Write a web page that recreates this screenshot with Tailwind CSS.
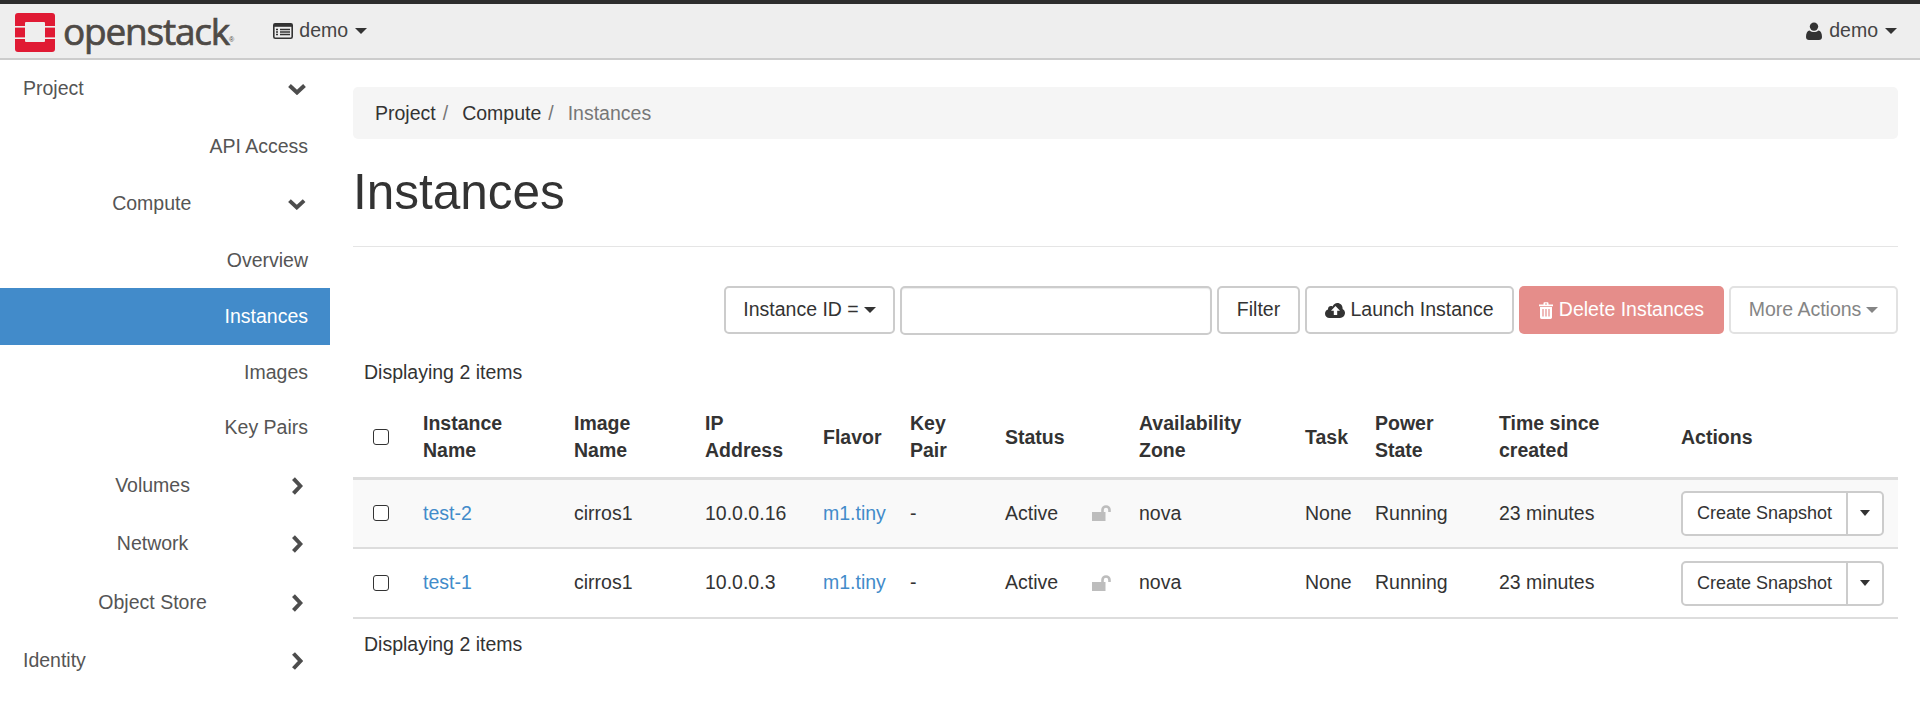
<!DOCTYPE html>
<html lang="en">
  <head>
    <meta charset="UTF-8" />
    <title>Instances</title>
    <script src="https://cdn.jsdelivr.net/npm/@tailwindcss/browser@4"></script>
  </head>
  <body class="bg-white text-[19.5px] text-[#333] font-['Liberation_Sans',Arial,sans-serif] h-[710px] overflow-hidden">
    <!-- top bar -->
    <div class="h-[60px] bg-[#eeeeee] border-t-[4px] border-t-[#2d2d2d] border-b-2 border-b-[#cccccc] flex items-center">
      <svg class="ml-[15px] mt-[3px]" width="40" height="39" viewBox="0 0 40 39">
        <rect width="40" height="39" rx="3" fill="#e01a34" />
        <rect x="10" y="9" width="20" height="20" rx="1" fill="#eeeeee" />
        <rect x="0" y="13" width="10" height="1.6" fill="#eeeeee" />
        <rect x="30" y="13" width="10" height="1.6" fill="#eeeeee" />
        <rect x="0" y="24.4" width="10" height="1.6" fill="#eeeeee" />
        <rect x="30" y="24.4" width="10" height="1.6" fill="#eeeeee" />
      </svg>
      <span class="ml-[8px] text-[37px] leading-none text-[#4e4a46] tracking-[-1.2px] [-webkit-text-stroke:0.7px_#4e4a46] font-['Open_Sans',sans-serif] mt-[-1px]">openstack</span>
      <span class="text-[7px] text-[#4e4a46] self-end mb-[13px]">®</span>
      <svg class="ml-[39px]" width="20" height="16" viewBox="0 0 20 16">
        <rect x="0.8" y="0.8" width="18.4" height="14.4" rx="1.5" fill="none" stroke="#333" stroke-width="1.6" />
        <rect x="0.8" y="0.8" width="18.4" height="3" fill="#333" />
        <path d="M3 6.5h2M3 9h2M3 11.5h2M7 6.5h10M7 9h10M7 11.5h10" stroke="#333" stroke-width="1.3" />
      </svg>
      <span class="ml-[6px] text-[#444]">demo</span>
      <span class="ml-[7px] border-x-[6px] border-t-[6px] border-x-transparent border-t-[#333]"></span>
      <div class="ml-auto mr-[23px] flex items-center">
        <svg width="16" height="18" viewBox="0 0 16 18">
          <circle cx="8" cy="4.6" r="4.2" fill="#333" />
          <path d="M0 15c0-4 1.2-6.4 3.6-6.6 1.2 1 2.7 1.6 4.4 1.6s3.200-.6 4.400-1.600c2.400.2 3.600 2.600 3.600 6.600 0 1.800-1.200 3-3 3H3c-1.800 0-3-1.200-3-3z" fill="#333" />
        </svg>
        <span class="ml-[7px] text-[#444]">demo</span>
        <span class="ml-[7px] border-x-[6px] border-t-[6px] border-x-transparent border-t-[#333]"></span>
      </div>
    </div>

    <div class="flex">
      <!-- sidebar -->
      <div class="w-[330px] shrink-0 text-[#555]">
        <div class="h-[57px] flex items-center justify-between pl-[23px] pr-[24px]">
          <span>Project</span>
          <svg width="18" height="12" viewBox="0 0 18 12"><path d="M1.500 2.500l7.500 7 7.500-7" fill="none" stroke="#4d4d4d" stroke-width="4" /></svg>
        </div>
        <div class="h-[57px] pt-[2px] flex items-center justify-end pr-[22px]">API Access</div>
        <div class="h-[57px] pt-[2px] flex items-center">
          <span class="ml-[15px] w-[280px] text-center">Compute</span>
          <svg class="ml-auto mr-[24px]" width="18" height="12" viewBox="0 0 18 12"><path d="M1.500 2.500l7.500 7 7.500-7" fill="none" stroke="#4d4d4d" stroke-width="4" /></svg>
        </div>
        <div class="h-[57px] pt-[2px] flex items-center justify-end pr-[22px]">Overview</div>
        <div class="h-[57px] flex items-center justify-end pr-[22px] bg-[#428bca] text-white">Instances</div>
        <div class="h-[56px] flex items-center justify-end pr-[22px]">Images</div>
        <div class="h-[56px] pb-[2px] flex items-center justify-end pr-[22px]">Key Pairs</div>
        <div class="h-[58px] flex items-center">
          <span class="ml-[14px] w-[280px] text-center">Volumes</span>
          <svg class="ml-auto mr-[27px]" width="12" height="18" viewBox="0 0 12 18"><path d="M2.500 1.500l7 7.500-7 7.500" fill="none" stroke="#4d4d4d" stroke-width="4" /></svg>
        </div>
        <div class="h-[58px] flex items-center">
          <span class="ml-[14px] w-[280px] text-center">Network</span>
          <svg class="ml-auto mr-[27px]" width="12" height="18" viewBox="0 0 12 18"><path d="M2.500 1.500l7 7.500-7 7.500" fill="none" stroke="#4d4d4d" stroke-width="4" /></svg>
        </div>
        <div class="h-[59px] flex items-center">
          <span class="ml-[14px] w-[280px] text-center">Object Store</span>
          <svg class="ml-auto mr-[27px]" width="12" height="18" viewBox="0 0 12 18"><path d="M2.500 1.500l7 7.500-7 7.500" fill="none" stroke="#4d4d4d" stroke-width="4" /></svg>
        </div>
        <div class="h-[58px] flex items-center justify-between pl-[23px] pr-[27px]">
          <span>Identity</span>
          <svg width="12" height="18" viewBox="0 0 12 18"><path d="M2.500 1.500l7 7.500-7 7.500" fill="none" stroke="#4d4d4d" stroke-width="4" /></svg>
        </div>
      </div>

      <!-- main -->
      <div class="w-[1545px] ml-[23px] pt-[27px]">
        <div class="h-[52px] pt-[2px] bg-[#f5f5f5] rounded-[5px] flex items-center pl-[22px]">
          <span class="text-[#333]">Project</span><span class="text-[#777] ml-[7px]">/</span>
          <span class="ml-[14px] text-[#333]">Compute</span><span class="text-[#777] ml-[7px]">/</span>
          <span class="ml-[14px] text-[#777]">Instances</span>
        </div>
        <h1 class="mt-[27px] text-[49.5px] leading-[52px] text-[#333]">Instances</h1>
        <div class="mt-[28px] border-t border-[#e5e5e5]"></div>

        <!-- toolbar -->
        <div class="mt-[39px] flex justify-end gap-[5px] h-[48px]">
          <button class="w-[171px] border-2 border-[#ccc] rounded-[5px] flex items-center justify-center gap-[5px]">Instance ID =<span class="border-x-[6px] border-t-[6px] border-x-transparent border-t-[#333]"></span></button>
          <input class="w-[312px] h-[49px] border-2 border-[#ccc] rounded-[5px] bg-white shadow-[inset_0_1px_1px_rgba(0,0,0,0.075)]" type="text" />
          <button class="w-[83px] border-2 border-[#ccc] rounded-[5px]">Filter</button>
          <button class="w-[209px] border-2 border-[#ccc] rounded-[5px] flex items-center justify-center gap-[5px]">
            <svg width="20" height="15" viewBox="0 0 20 15">
              <path d="M4.500 15C2 15 0 13.200 0 10.700c0-2 1.200-3.500 3-4.100C3 6.400 3 6.200 3 6c0-1.700 1.300-3 3-3 .6 0 1.100.2 1.600.4C8.500 1.400 10.300 0 12.400 0c2.900 0 5.200 2.300 5.200 5.200v.7c1.400.7 2.400 2.200 2.400 3.900 0 2.800-2.200 5.200-5 5.200z" fill="#333" />
              <path d="M10.500 3l4.500 4.700h-2.800v4.300H8.800V7.700H6z" fill="#fff" />
            </svg>
            Launch Instance</button>
          <button class="w-[205px] bg-[#e58d8a] rounded-[5px] text-white flex items-center justify-center gap-[6px]">
            <svg width="14" height="17" viewBox="0 0 14 17">
              <path d="M4.500 2.500V1.300c0-.6.400-1 1-1h3c.6 0 1 .4 1 1v1.200H14v1.700H0V2.500zM6 1.500v1h2v-1zM1 5h12v10.300c0 .9-.7 1.700-1.600 1.700H2.600C1.700 17 1 16.200 1 15.300z" fill="#fff" />
              <path d="M4 7v7.500M7 7v7.500M10 7v7.500" stroke="#e58d8a" stroke-width="1.200" />
            </svg>
            Delete Instances</button>
          <button class="w-[169px] border-2 border-[#e2e2e2] rounded-[5px] text-[#858585] flex items-center justify-center gap-[5px]">More Actions<span class="border-x-[6px] border-t-[6px] border-x-transparent border-t-[#858585]"></span></button>
        </div>

        <div class="mt-[26px] pl-[11px] leading-[24px]">Displaying 2 items</div>

        <!-- table -->
        <table class="mt-[14px] w-full table-fixed border-collapse">
          <colgroup>
            <col class="w-[60px]" /><col class="w-[151px]" /><col class="w-[131px]" /><col class="w-[118px]" />
            <col class="w-[87px]" /><col class="w-[95px]" /><col class="w-[87px]" /><col class="w-[47px]" />
            <col class="w-[166px]" /><col class="w-[70px]" /><col class="w-[124px]" /><col class="w-[182px]" /><col />
          </colgroup>
          <thead>
            <tr class="h-[80px] border-b-[3px] border-[#dddddd] font-bold text-left leading-[27px]">
              <th class="pl-[20px]"><span class="block w-[16px] h-[16px] border-[1.5px] border-[#333] rounded-[3px] bg-white"></span></th>
              <th class="pl-[10px]">Instance<br />Name</th>
              <th class="pl-[10px]">Image<br />Name</th>
              <th class="pl-[10px]">IP<br />Address</th>
              <th class="pl-[10px]">Flavor</th>
              <th class="pl-[10px]">Key<br />Pair</th>
              <th class="pl-[10px]">Status</th>
              <th></th>
              <th class="pl-[10px]">Availability<br />Zone</th>
              <th class="pl-[10px]">Task</th>
              <th class="pl-[10px]">Power<br />State</th>
              <th class="pl-[10px]">Time since<br />created</th>
              <th class="pl-[10px]">Actions</th>
            </tr>
          </thead>
          <tbody>
            <tr class="h-[70px] bg-[#f9f9f9] border-b-2 border-[#dddddd]">
              <td class="pl-[20px]"><span class="block w-[16px] h-[16px] border-[1.5px] border-[#333] rounded-[3px] bg-white"></span></td>
              <td class="pl-[10px] text-[#428bca]">test-2</td>
              <td class="pl-[10px]">cirros1</td>
              <td class="pl-[10px]">10.0.0.16</td>
              <td class="pl-[10px] text-[#428bca]">m1.tiny</td>
              <td class="pl-[10px]">-</td>
              <td class="pl-[10px]">Active</td>
              <td class="pl-[10px]">
                <svg width="19" height="16" viewBox="0 0 19 16"><path d="M0 7h13.500v9H0z" fill="#bdbdbd" /><path d="M10.500 7V5a3.500 3.500 0 0 1 7 0v2" fill="none" stroke="#bdbdbd" stroke-width="2.600" /></svg>
              </td>
              <td class="pl-[10px]">nova</td>
              <td class="pl-[10px]">None</td>
              <td class="pl-[10px]">Running</td>
              <td class="pl-[10px]">23 minutes</td>
              <td class="pl-[10px]">
                <div class="flex w-[203px] h-[45px] text-[18px] border-2 border-[#ccc] rounded-[5px] bg-white">
                  <span class="w-[165px] flex items-center justify-center border-r-2 border-[#ccc]">Create Snapshot</span>
                  <span class="flex-1 flex items-center justify-center"><span class="border-x-[5.500px] border-t-[6px] border-x-transparent border-t-[#333]"></span></span>
                </div>
              </td>
            </tr>
            <tr class="h-[70px] border-b-2 border-[#dddddd]">
              <td class="pl-[20px]"><span class="block w-[16px] h-[16px] border-[1.5px] border-[#333] rounded-[3px] bg-white"></span></td>
              <td class="pl-[10px] text-[#428bca]">test-1</td>
              <td class="pl-[10px]">cirros1</td>
              <td class="pl-[10px]">10.0.0.3</td>
              <td class="pl-[10px] text-[#428bca]">m1.tiny</td>
              <td class="pl-[10px]">-</td>
              <td class="pl-[10px]">Active</td>
              <td class="pl-[10px]">
                <svg width="19" height="16" viewBox="0 0 19 16"><path d="M0 7h13.500v9H0z" fill="#bdbdbd" /><path d="M10.500 7V5a3.500 3.500 0 0 1 7 0v2" fill="none" stroke="#bdbdbd" stroke-width="2.600" /></svg>
              </td>
              <td class="pl-[10px]">nova</td>
              <td class="pl-[10px]">None</td>
              <td class="pl-[10px]">Running</td>
              <td class="pl-[10px]">23 minutes</td>
              <td class="pl-[10px]">
                <div class="flex w-[203px] h-[45px] text-[18px] border-2 border-[#ccc] rounded-[5px] bg-white">
                  <span class="w-[165px] flex items-center justify-center border-r-2 border-[#ccc]">Create Snapshot</span>
                  <span class="flex-1 flex items-center justify-center"><span class="border-x-[5.500px] border-t-[6px] border-x-transparent border-t-[#333]"></span></span>
                </div>
              </td>
            </tr>
          </tbody>
        </table>
        <div class="mt-[13px] pl-[11px] leading-[24px]">Displaying 2 items</div>
      </div>
    </div>
  </body>
</html>
